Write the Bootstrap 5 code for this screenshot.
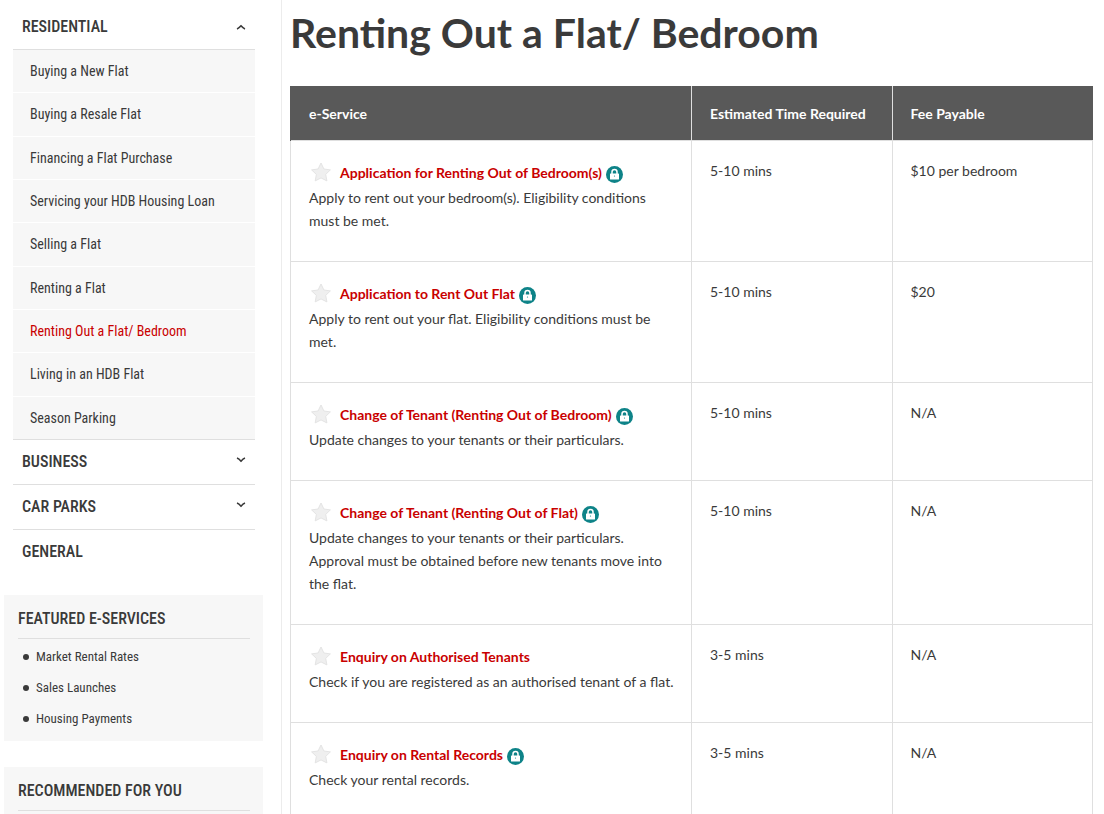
<!DOCTYPE html>
<html lang="en">
<head>
<meta charset="utf-8">
<meta name="viewport" content="width=device-width, initial-scale=1">
<title>Renting Out a Flat/ Bedroom</title>
<link href="https://cdn.jsdelivr.net/npm/bootstrap@5.3.0/dist/css/bootstrap.min.css" rel="stylesheet">
<style>
:root { --ink: #3a3a3a; --brand: #c90000; --rule: #dfdfdf; --panel: #f7f7f7; --narrow: "Roboto Condensed", Roboto, sans-serif; }
body { font-family: Lato, sans-serif; font-size: 14px; line-height: 23px; color: var(--ink); }
a, button { color: inherit; text-decoration: none; }
.side { width: 282px; padding: 5px 18px 0 4px; border-right: 1px solid #ececec; }
.menu { margin: 0 8px 21px 9px; }
.menu-head { font: 500 16px/44px var(--narrow); padding: 0 9px; border: 0; border-bottom: 1px solid var(--rule); background: transparent; }
.menu-head.last-head { border-bottom: 0; }
.sub-list { min-height: 390px; gap: 1px; border-bottom: 1px solid var(--rule); }
.sub-list li { background: var(--panel); padding: 0 17px; font: 400 14px/42px var(--narrow); }
.sub-list .current { color: var(--brand); }
.panel { background: var(--panel); padding: 9px 13px 7px 14px; margin-bottom: 26px; }
.panel h2 { font: 500 16px/30px var(--narrow); border-bottom: 1px solid var(--rule); padding: 0 0 4px; margin: 0 0 2px; }
.panel li { font: 400 13px/31px var(--narrow); gap: 7px; padding-left: 5px; }
.dot { width: 6px; height: 6px; background: var(--ink); }
main { padding: 9px 11px 0 8px; }
h1 { font-size: 41px; line-height: 48px; font-weight: 700; margin: 0 0 29px; }
.services { border-color: var(--rule); table-layout: fixed; color: var(--ink); }
.services thead tr { border-width: 0; }
.services th { font-weight: 700; background: #595959; color: #fff; padding: 16px 18px 15px; border-width: 0; }
.services th:first-child { border-left: 1px solid #595959; }
.services th + th { border-left: 1px solid var(--rule); }
.services td { padding: 18px 16px 29px 18px; vertical-align: top; color: var(--ink); }
.svc { height: 27px; gap: 4px; font-weight: 700; }
.svc a { color: var(--brand); }
.star { width: 22px; height: 22px; margin-right: 5px; }
.padlock { width: 17px; height: 17px; margin-top: 4px; }
</style>
</head>
<body>
<svg class="d-none">
  <symbol id="star" viewBox="0 0 22 22"><path d="M12 1l2.900 6 6.500.9-4.700 4.500 1.200 6.500-5.900-3-5.800 3 1.200-6.500L2.600 7.900l6.500-.9z" fill="#efefef" stroke="#e4e4e4" stroke-linejoin="round"/></symbol>
  <symbol id="padlock" viewBox="0 0 17 17"><circle cx="8.500" cy="8.500" r="8.500" fill="#0e8388"/><rect x="4" y="7.500" width="9" height="6" rx=".6" fill="#fff"/><path d="M6 8V6a2.500 2.500 0 0 1 5 0v2" fill="none" stroke="#fff" stroke-width="1.500"/><circle cx="8.500" cy="10" r=".6" fill="#0e8388"/></symbol>
  <symbol id="down" viewBox="0 0 10 6"><path d="M1 1q2 .8 4 3.200q2-2.400 4-3.200" fill="none" stroke="#3a3a3a" stroke-width="1.500"/></symbol>
  <symbol id="up" viewBox="0 0 10 6"><path d="M1 5q2-.8 4-3.200q2 2.400 4 3.200" fill="none" stroke="#3a3a3a" stroke-width="1.500"/></symbol>
</svg>
<div class="d-flex min-vh-100">
  <aside class="side flex-shrink-0">
    <nav class="menu">
      <button class="menu-head d-flex w-100 align-items-center justify-content-between" type="button">RESIDENTIAL <svg width="10" height="6"><use href="#up"/></svg></button>
      <ul class="sub-list list-unstyled d-flex flex-column mb-0">
        <li class="flex-fill"><a href="#">Buying a New Flat</a></li>
        <li class="flex-fill"><a href="#">Buying a Resale Flat</a></li>
        <li class="flex-fill"><a href="#">Financing a Flat Purchase</a></li>
        <li class="flex-fill"><a href="#">Servicing your HDB Housing Loan</a></li>
        <li class="flex-fill"><a href="#">Selling a Flat</a></li>
        <li class="flex-fill"><a href="#">Renting a Flat</a></li>
        <li class="flex-fill current"><a href="#" aria-current="page">Renting Out a Flat/ Bedroom</a></li>
        <li class="flex-fill"><a href="#">Living in an HDB Flat</a></li>
        <li class="flex-fill"><a href="#">Season Parking</a></li>
      </ul>
      <button class="menu-head d-flex w-100 align-items-center justify-content-between" type="button">BUSINESS <svg class="mb-1" width="10" height="6"><use href="#down"/></svg></button>
      <button class="menu-head d-flex w-100 align-items-center justify-content-between" type="button">CAR PARKS <svg class="mb-1" width="10" height="6"><use href="#down"/></svg></button>
      <a class="menu-head last-head d-block" href="#">GENERAL</a>
    </nav>
    <section class="panel">
      <h2>FEATURED E-SERVICES</h2>
      <ul class="list-unstyled mb-0">
        <li class="d-flex align-items-center"><span class="dot rounded-circle"></span><a href="#">Market Rental Rates</a></li>
        <li class="d-flex align-items-center"><span class="dot rounded-circle"></span><a href="#">Sales Launches</a></li>
        <li class="d-flex align-items-center"><span class="dot rounded-circle"></span><a href="#">Housing Payments</a></li>
      </ul>
    </section>
    <section class="panel mb-0"><h2>RECOMMENDED FOR YOU</h2></section>
  </aside>
  <main class="flex-fill">
    <h1>Renting Out a Flat/ Bedroom</h1>
    <table class="services table table-bordered mb-0">
      <colgroup><col class="w-50"><col class="w-25"><col class="w-25"></colgroup>
      <thead><tr><th>e-Service</th><th>Estimated Time Required</th><th>Fee Payable</th></tr></thead>
      <tbody>
        <tr><td><div class="svc d-flex align-items-center"><svg class="star"><use href="#star"/></svg><a href="#">Application for Renting Out of Bedroom(s)</a><svg class="padlock"><use href="#padlock"/></svg></div>Apply to rent out your bedroom(s). Eligibility conditions must be met.</td><td>5-10 mins</td><td>$10 per bedroom</td></tr>
        <tr><td><div class="svc d-flex align-items-center"><svg class="star"><use href="#star"/></svg><a href="#">Application to Rent Out Flat</a><svg class="padlock"><use href="#padlock"/></svg></div>Apply to rent out your flat. Eligibility conditions must be met.</td><td>5-10 mins</td><td>$20</td></tr>
        <tr><td><div class="svc d-flex align-items-center"><svg class="star"><use href="#star"/></svg><a href="#">Change of Tenant (Renting Out of Bedroom)</a><svg class="padlock"><use href="#padlock"/></svg></div>Update changes to your tenants or their particulars.</td><td>5-10 mins</td><td>N/A</td></tr>
        <tr><td><div class="svc d-flex align-items-center"><svg class="star"><use href="#star"/></svg><a href="#">Change of Tenant (Renting Out of Flat)</a><svg class="padlock"><use href="#padlock"/></svg></div>Update changes to your tenants or their particulars. Approval must be obtained before new tenants move into the flat.</td><td>5-10 mins</td><td>N/A</td></tr>
        <tr><td><div class="svc d-flex align-items-center"><svg class="star"><use href="#star"/></svg><a href="#">Enquiry on Authorised Tenants</a></div>Check if you are registered as an authorised tenant of a flat.</td><td>3-5 mins</td><td>N/A</td></tr>
        <tr><td><div class="svc d-flex align-items-center"><svg class="star"><use href="#star"/></svg><a href="#">Enquiry on Rental Records</a><svg class="padlock"><use href="#padlock"/></svg></div>Check your rental records.</td><td>3-5 mins</td><td>N/A</td></tr>
      </tbody>
    </table>
  </main>
</div>
<script src="https://cdn.jsdelivr.net/npm/bootstrap@5.3.0/dist/js/bootstrap.bundle.min.js"></script>
</body>
</html>
